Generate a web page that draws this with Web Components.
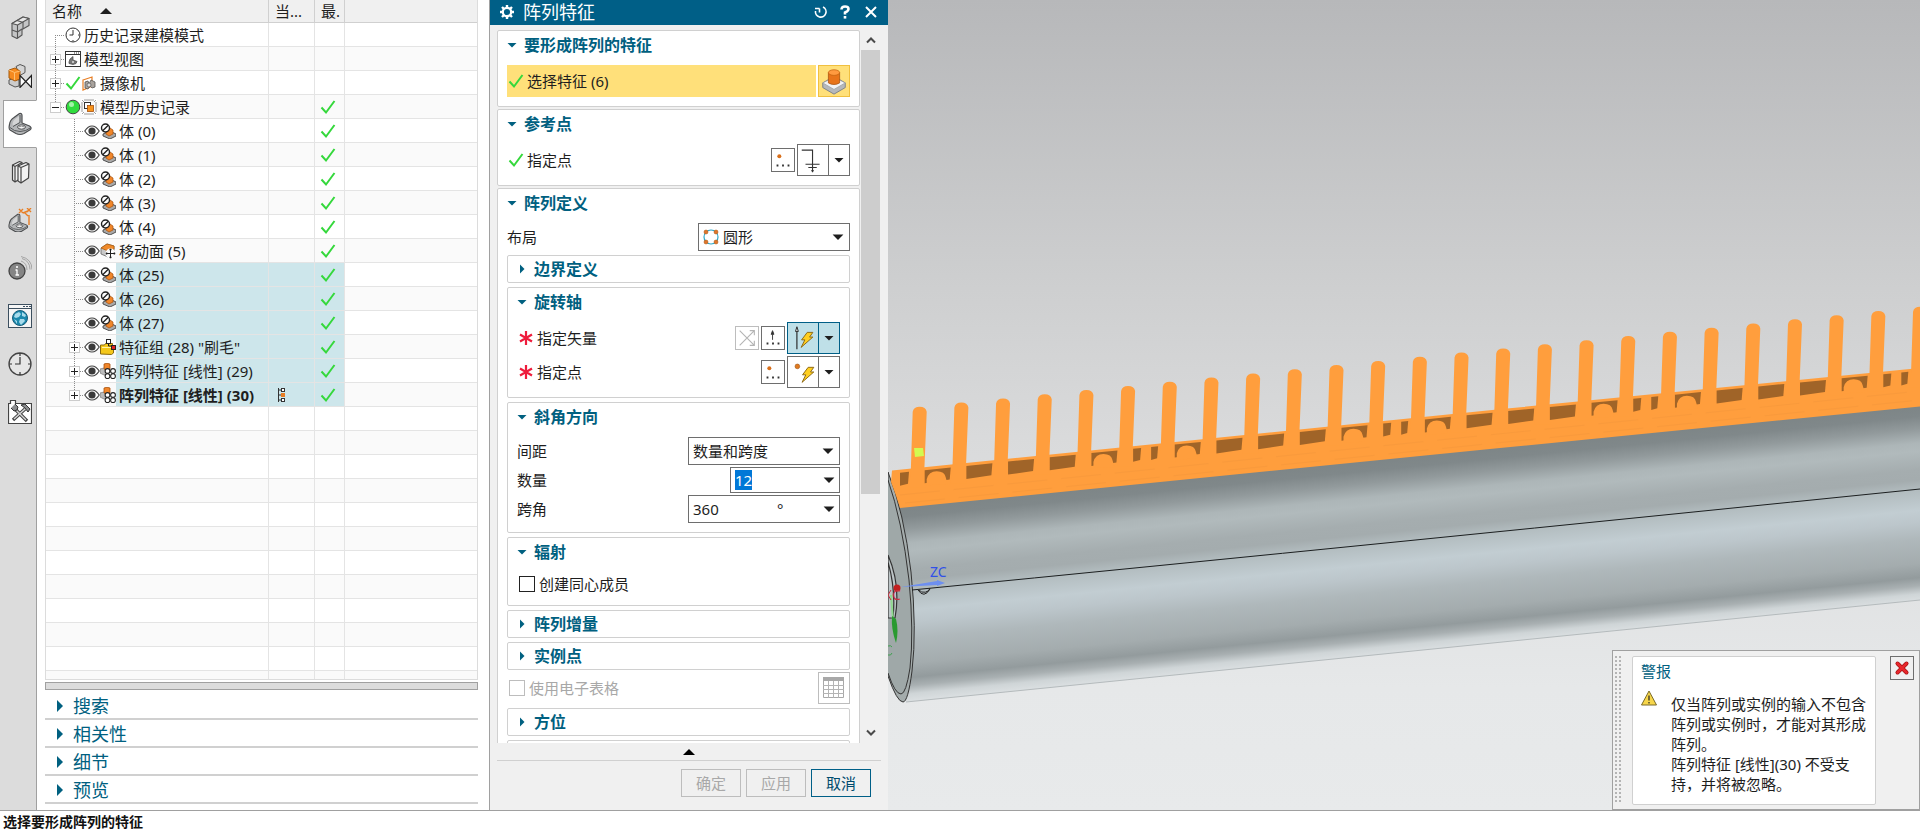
<!DOCTYPE html>
<html lang="zh-CN">
<head>
<meta charset="utf-8">
<title>阵列特征</title>
<style>
html,body{margin:0;height:100%}
body{font-family:"Noto Sans","Noto Sans CJK SC",sans-serif;font-size:15px;line-height:20px;color:#1e1e1e;background:#fff;overflow:hidden}
</style>
</head>
<body>
<nx-app></nx-app>
<script>
const define = (name, html, setup) => {
  const tpl = document.createElement('template');
  tpl.innerHTML = html;
  customElements.define(name, class extends HTMLElement {
    connectedCallback() {
      if (this.shadowRoot) return;
      this.attachShadow({mode: 'open'}).append(tpl.content.cloneNode(true));
      if (setup) setup(this, this.shadowRoot);
    }
  });
};

/* ---------- icons: [viewBox size, markup] ---------- */
const BRACKET = `<path d="M1.500 12.500Q2 8 6 5.500L11.500 1.500q2.500-.5 2.500 2V11l7.500 3q2.500 1.500 1 3.500l-6.500 4q-4 2-8 0L2 18q-1.500-1-.5-5.500z" fill="#b4b6b8" stroke="#4c4e50" stroke-width="1.200" stroke-linejoin="round"/><path d="M4.500 12Q5 8 8.500 6l3-2.200V10L5 14z" fill="#d4d5d6"/><path d="M5 14.500l7-4V3M2 15.500q4 4 10 4t11-4" fill="none" stroke="#55585a"/><ellipse cx="13.500" cy="15" rx="4" ry="2.200" fill="#f4f4f4" stroke="#4c4e50"/><path d="M10.500 15q3-2 6 0" fill="none" stroke="#888"/>`;
const BOLT = `<path d="M8.500 0h6L11 5h3.500L2 16l4-8H2.500z" fill="#ffcf20" stroke="#8a6410" stroke-width="1"/>`;
const ICONS = {
  assembly: [24, `<g stroke="#555" stroke-width="1.100" stroke-linejoin="round"><path d="M4 7.500L15 1l6 1.500v7l-7 4V19l-5 3.500-5-2.500z" fill="#c4c5c6"/><path d="M4 7.500L15 1l6 1.500L9.500 9z" fill="#e8e8e8"/><path d="M9.500 9v13M4 14l5.500 2 4.500-3M15 6v7M9 4.500l5.500 1.700" fill="none"/></g>`],
  constraint: [24, `<g stroke="#555" stroke-linejoin="round"><path d="M1 16l5-2 5 2v6l-4 1-6-3z" fill="#ccc"/><path d="M8 2.500l4-2 5 2v6l-5 3z" fill="#d5d5d5"/><path d="M1 6l6-2 5 3v8l-5 2-6-3z" fill="#f58a1f" stroke="#a65a0c"/><path d="M1 6l5.500 2.500L12 7M6.500 8.500V16" fill="none" stroke="#ffc070"/></g><path d="M12 11.500v12L23.500 11.500v12z" fill="#fff" stroke="#222" stroke-width="1.200"/>`],
  part: [24, BRACKET],
  library: [24, `<g fill="#f2f2f2" stroke="#444" stroke-width="1.200" stroke-linejoin="round"><path d="M4.500 5l7-3.500 2.500 1v15l-7 4.500-2.500-2z"/><path d="M4.500 5L7 6.500 14 2.500M7 6.500V22" fill="none"/><path d="M10 6l8-3.500 3 1.500-.5 14L13 23l-3-2z"/><path d="M10 6l3 1.500L21 4M13 7.500V23" fill="none"/></g>`],
  dimension: [24, `<g transform="translate(0 5) scale(.85)">${BRACKET}</g><path d="M11 1l4 4M15 1l-4 4M19 0l4 4M23 0l-4 4M15 5l5-2M21 7v10M17 5l3 3" stroke="#e87e24" stroke-width="1.400" fill="none"/>`],
  info: [24, `<circle cx="9" cy="15" r="8" fill="#858585" stroke="#444" stroke-width="1.300"/><path d="M9 13.500V19M7.500 14H9M7.500 19H11" stroke="#fff" stroke-width="1.300" fill="none"/><circle cx="9" cy="11" r="1.100" fill="#fff"/><path d="M13 5q6 2 6 9M14 2.500q8 2.500 8 11M13 .5q11 2.500 11 13" fill="none" stroke="#a4a4a4"/>`],
  web: [24, `<rect x=".5" y=".5" width="23" height="23" fill="#f6f6f6" stroke="#3c4f5f"/><path d="M.5 4.500h23M15 2.500h2M18 2.500h2M21 2.500h2" stroke="#3c4f5f"/><circle cx="12" cy="14" r="7.500" fill="#1c89ad" stroke="#175e7b"/><path d="M7 10l4-2 2 2-2 3-3 1-2-1zM14 8l4 3-1 2-3-1zM12 15h4l1 2-4 4-2-3zM6 15l3 2v3z" fill="#a9dcec"/>`],
  clock: [24, `<circle cx="12" cy="12" r="11" fill="#e6e6e6" stroke="#444" stroke-width="1.300"/><path d="M12 5v7H7" fill="none" stroke="#333" stroke-width="1.200"/><path d="M12 1v3M12 20v3M1 12h3M20 12h3" stroke="#333" stroke-width="1.200"/>`],
  roles: [24, `<path d="M.5 23.500v-20h2v-3h5v3h16v20z" fill="#fff" stroke="#444" stroke-width="1.200"/><path d="M5 20L17 9M7 9l12 12" stroke="#444" stroke-width="3.400"/><path d="M6 19L17 9M8 10l10 10" stroke="#d8d8d8" stroke-width="1.400"/><path d="M3 8l3 3 3-1 1-3-3-3M13 5l4-1 5 5-2 3-3-4z" fill="#8a8c8e" stroke="#333"/>`],
  history: [16, `<circle cx="8" cy="8" r="7" fill="#fff" stroke="#333"/><path d="M8 3v5H4.500" fill="none" stroke="#333"/><path d="M8 13v1.500M13 8h1.500" stroke="#333"/>`],
  view: [16, `<rect x=".5" y=".5" width="15" height="15" fill="#fff" stroke="#333"/><path d="M.5 3.500h15M9 2h1M11 2h1M13 2h1" stroke="#333"/><path d="M4 11l1-3 3-2.500V9l4 1.500-1 2-3 1-4-1z" fill="#777" stroke="#444" stroke-width=".7"/><circle cx="8" cy="11" r="1" fill="#ddd"/>`],
  check: [16, `<path d="M1.500 8.500l4.500 5L14.500 2" fill="none" stroke="#35d83c" stroke-width="2"/>`],
  camera: [16, `<path d="M2 5l9-3v9l-9 4z" fill="#fff" stroke="#e87e24" stroke-width="1.200"/><path d="M4 13V7l3-1 1 3 2-4 4 2v5l-3 1-2-2-2 3z" fill="#a9a39d" stroke="#555" stroke-width=".8"/><circle cx="8" cy="10" r="2" fill="#ddd" stroke="#555" stroke-width=".7"/>`],
  green: [16, `<circle cx="8" cy="8" r="6.800" fill="#2fdc3d" stroke="#444"/><circle cx="6.500" cy="5.500" r="2.500" fill="#a3f3a8"/>`],
  model: [16, `<rect x="1" y="1" width="14" height="14" fill="none" stroke="#888" stroke-width=".8"/><path d="M0 0h3v3H0zM13 0h3v3h-3zM0 13h3v3H0zM13 13h3v3h-3z" fill="#fff"/><path d="M1 1l2 2M15 1l-2 2M1 15l2-2M15 15l-2-2" stroke="#888" stroke-width=".8"/><rect x="3.500" y="3.500" width="6" height="6" fill="#fff" stroke="#333"/><rect x="6.500" y="6.500" width="6" height="6" fill="#f7941d" stroke="#a7500c" stroke-width=".8"/>`],
  eye: [16, `<path d="M.8 8Q4 3 8 3t7.200 5Q12 13 8 13T.8 8z" fill="#fff" stroke="#444" stroke-width="1.200"/><circle cx="8" cy="8" r="3.600" fill="#3a3a3a"/>`],
  body: [16, `<path d="M3 11l7-3 6 3v2l-6 3-7-3z" fill="#a9a9a9" stroke="#444" stroke-width=".9"/><path d="M6 9l4-4 3 2v4l-4 2-3-2z" fill="#f0862a" stroke="#a7500c" stroke-width=".7"/><circle cx="5.500" cy="5" r="4" fill="#fff" fill-opacity=".8" stroke="#222" stroke-width="1.400"/><path d="M2.700 7.800l5.600-5.600" stroke="#222" stroke-width="1.400"/>`],
  moveface: [16, `<path d="M1 5l6-4 7 2v7l-6 4-7-3z" fill="#c8c8c8" stroke="#666" stroke-width=".8"/><path d="M1 5l6-4 7 2v3l-6 2z" fill="#f08a2a" stroke="#b0600c" stroke-width=".8"/><circle cx="10.500" cy="10.500" r="5" fill="#fff"/><path d="M10.500 6v9M6 10.500h9M9.500 7.200l1-1.400 1 1.400M9.500 13.800l1 1.400 1-1.400M7.200 9.500l-1.400 1 1.400 1M13.800 9.500l1.400 1-1.400 1" fill="none" stroke="#222"/>`],
  group: [16, `<path d="M.5 15V6h4l1-1.500h7V6l1 1v7l-2 1.500z" fill="#f4c71a" stroke="#8a6a10"/><path d="M2 8h10v1H2z" fill="#fff3a8"/><path d="M8.500 3v4h5" fill="none" stroke="#222"/><rect x="6.500" y=".5" width="4" height="4" fill="#fff" stroke="#222"/><rect x="11.500" y="6.500" width="4" height="4" fill="#e02020" stroke="#222"/>`],
  pattern: [16, `<path d="M0 6l4-1 4 2v4l-4 1-4-2z" fill="#bbb" stroke="#777" stroke-width=".7"/><path d="M4 1q3-1.500 6 0v5q-3 2-6 0z" fill="#f0862a" stroke="#a7500c" stroke-width=".8"/><g fill="#fff" stroke="#222" stroke-width="1.100"><circle cx="7.500" cy="8" r="2.400"/><circle cx="13" cy="8" r="2.400"/><circle cx="7.500" cy="13.200" r="2.400"/><circle cx="13" cy="13.200" r="2.400"/></g>`],
  current: [16, `<path d="M1.500 1v14" stroke="#333"/><g fill="#fff" stroke="#333"><rect x="4.500" y="1.500" width="3" height="3"/><rect x="4.500" y="11.500" width="3" height="3"/></g><rect x="4" y="6" width="4" height="4" fill="#e87e24"/><path d="M1 3h3M1 8h3M1 13h3" stroke="#333"/>`],
  gear: [16, `<path d="M8 1v14M1 8h14M3 3l10 10M13 3L3 13" stroke="#fff" stroke-width="2.400"/><circle cx="8" cy="8" r="4.200" fill="#005f87" stroke="#fff" stroke-width="2.200"/>`],
  reset: [16, `<path d="M6.500 4.500v4M6.500 4.500h-4.500M10 3a5.300 5.300 0 1 1-7.500 4" fill="none" stroke="#fff" stroke-width="1.600"/>`],
  help: [16, `<path d="M4.500 5.500Q4.500 2.500 8 2.500t3.500 2.500Q11.500 7 8 8.500v2" fill="none" stroke="#fff" stroke-width="2.600"/><rect x="6.700" y="12" width="2.600" height="2.600" fill="#fff"/>`],
  close: [16, `<path d="M3 3l10 10M13 3L3 13" stroke="#fff" stroke-width="2"/>`],
  feature: [32, `<path d="M4 18l12-7 12 7v5l-12 7-12-7z" fill="#b5b8bc" stroke="#7d8084"/><path d="M4 18l12-6 12 6-12 7z" fill="#f2f3f5" stroke="#9a9da0" stroke-width=".8"/><path d="M10 7v11q6 3.500 12 0V7z" fill="#e8741a" stroke="#a7500c" stroke-width=".8"/><ellipse cx="16" cy="7" rx="6" ry="3" fill="#ff9a40" stroke="#c4630f" stroke-width=".8"/>`],
  pointdlg: [24, `<circle cx="8" cy="8" r="2.200" fill="#d96f1a"/><path d="M5 18h2M11 18h2M17 18h2" stroke="#333" stroke-width="2"/>`],
  vectordlg: [24, `<path d="M11.500 14V8M11.500 4l1.500 4h-3z" fill="#333" stroke="#333"/><path d="M5 18h2M11 18h2M17 18h2" stroke="#333" stroke-width="2"/>`],
  reverse: [24, `<path d="M4 20L20 4M4 4l16 16M15 4h5v5M15 20h5v-5" fill="none" stroke="#b4b4b4" stroke-width="1.200"/>`],
  ground: [32, `<path d="M4 5.500h11.500V20M8 20.500h15M11 24h9M14 27.500h3M15.500 20v9" fill="none" stroke="#333" stroke-width="1.200"/>`],
  vectorauto: [32, `<path d="M9.500 28V9" stroke="#222" stroke-width="1.200"/><path d="M9.500 4l1.500 5h-3z" fill="#fff" stroke="#222"/><g transform="translate(12 10)">${BOLT}</g>`],
  pointauto: [32, `<circle cx="10" cy="10" r="2.500" fill="#e07a20" stroke="#9c4f0c" stroke-width=".6"/><g transform="translate(13 11)">${BOLT}</g>`],
  circular: [16, `<circle cx="8" cy="8" r="7" fill="none" stroke="#2ba6c8" stroke-width="1.200"/><g fill="#e0762a" stroke="#a7500c" stroke-width=".5"><circle cx="3" cy="3" r="2"/><circle cx="13" cy="3" r="2"/><circle cx="3" cy="13" r="2"/><circle cx="13" cy="13" r="2"/></g>`],
  required: [16, `<path d="M8 1v14M2 4.500l12 7M14 4.500l-12 7" stroke="#ee1c3c" stroke-width="2.200"/>`],
  sheet: [24, `<path d="M1.500 1.500h20v20h-20z" fill="#fff" stroke="#a8a8a8"/><path d="M1 1h21v4H1z" fill="#a8a8a8"/><path d="M1 9.500h21M1 13.500h21M1 17.500h21M6.500 5v17M11.500 5v17M16.500 5v17" stroke="#b4b4b4"/>`],
  warning: [16, `<path d="M8 1L15.500 15H.5z" fill="#f7d64a" stroke="#7a6a28"/><path d="M8 5.500v5M8 12v1.500" stroke="#222" stroke-width="1.200"/>`],
  redx: [16, `<path d="M3.500 3.500l9 9M12.500 3.500l-9 9" stroke="#a31010" stroke-width="4" stroke-linecap="round"/><path d="M3.500 3.500l9 9M12.500 3.500l-9 9" stroke="#e8272c" stroke-width="2.600" stroke-linecap="round"/>`],
  chevup: [12, `<path d="M2 8.500L6 4.500l4 4" fill="none" stroke="#4a4a4a" stroke-width="2"/>`],
  chevdown: [12, `<path d="M2 3.500L6 7.500l4-4" fill="none" stroke="#4a4a4a" stroke-width="2"/>`],
  tridown: [10, `<path d="M.5 3h9L5 7.500z" fill="currentColor"/>`],
  triup: [12, `<path d="M0 9L6 3l6 6z" fill="currentColor"/>`],
  triright: [10, `<path d="M3 .5v9L7.500 5z" fill="currentColor"/>`],
  trirightlg: [12, `<path d="M3 0v12l6-6z" fill="currentColor"/>`]
};
define('nx-icon', `<style>:host{display:block;flex:none}svg{display:block}</style>`, (el, root) => {
  const [box, art] = ICONS[el.getAttribute('name')];
  const size = el.getAttribute('size') || box;
  root.innerHTML += `<svg width="${size}" height="${size}" viewBox="0 0 ${box} ${box}" aria-hidden="true">${art}</svg>`;
});

/* ---------- resource bar ---------- */
define('nx-rail', `<style>
:host{display:block;flex:none;width:36px;padding-top:4px;background:#dcdcdc;border-right:1px solid #a0a0a0}
button{display:flex;align-items:center;width:36px;height:48px;padding:0 0 0 7px;border:1px solid transparent;background:none;margin:0}
button.on{width:34px;margin-left:3px;padding-left:4px;background:#fff;border-color:#a0a0a0;border-right-color:#fff}
</style><div></div>`, (el, root) => {
  root.querySelector('div').innerHTML = [['assembly','装配导航器'],['constraint','约束导航器'],['part','部件导航器'],['library','重用库'],['dimension','尺寸'],['info','信息'],['web','浏览器'],['clock','历史记录'],['roles','角色']]
    .map(([n, t]) => `<button class="${n === 'part' ? 'on' : ''}" aria-label="${t}"><nx-icon name="${n}"></nx-icon></button>`).join('');
});

/* ---------- part navigator ---------- */
define('nx-tree', `<style>
:host{display:block;flex:1;min-height:0;overflow:hidden;border:1px solid #dcdcdc;border-top:0}
table{width:100%;border-collapse:separate;border-spacing:0;table-layout:fixed}
th,td{box-sizing:border-box;padding:0;height:24px;border-bottom:1px solid #e4e4e4;border-right:1px solid #e4e4e4;font-weight:400;text-align:left;white-space:nowrap;overflow:hidden}
th{height:23px;background:#f0f0f0;border-color:#d0d0d0;padding-left:6px}
th:last-child,td:last-child{border-right:0}
tbody tr:nth-child(even){background:#fafafa}
.c2{width:46px}.c3{width:30px}.c4{width:132px}
.head,.node,.mid{display:flex;align-items:center}
.head{gap:18px}
.node{height:23px}
.node svg{flex:none;overflow:visible}
.name{flex:1;align-self:stretch;padding-left:3px;line-height:25px}
.mid{justify-content:flex-start;padding-left:5px}
.cur{padding-left:8px}
.sel .name,.sel td.a{background:#cde6eb}
.bold{font-weight:700}
</style><table><colgroup><col><col class="c2"><col class="c3"><col class="c4"></colgroup>
<thead><tr><th><div class="head">名称<nx-icon name="triup"></nx-icon></div></th><th>当...</th><th>最.</th><th></th></tr></thead><tbody></tbody></table>`, (el, root) => {
  const rows = [
    [1,'','history','历史记录建模模式'],[1,'+','view','模型视图'],[1,'+','check camera','摄像机'],[1,'-','green model','模型历史记录',1],
    ...[0,1,2,3,4].map(n => [2,'','eye body',`体 (${n})`,1]),
    [2,'','eye moveface','移动面 (5)',1],
    ...[25,26,27].map(n => [2,'','eye body',`体 (${n})`,1,1]),
    [2,'+','eye group','特征组 (28) "刷毛"',1,1],[2,'+','eye pattern','阵列特征 [线性] (29)',1,1],[2,'+','eye pattern','阵列特征 [线性] (30)',1,1,1]
  ];
  const guide = (lvl, exp, i) => {
    const x = lvl === 1 ? 9 : 28, w = lvl === 1 ? 19 : 38;
    const top = i === 0 ? 12 : 0, bot = i === 3 || i === rows.length - 1 ? 12 : 24;
    return `<svg width="${w}" height="23" aria-hidden="true"><path d="M${x}.500 ${top}V${bot}M${x} 12.500H${w}" fill="none" stroke="#8c8c8c" stroke-dasharray="1 1"/>` +
      (exp ? `<rect x="${x - 5}.500" y="7.500" width="10" height="10" fill="#fff" stroke="#ccc"/><path d="M${x - 3} 12.500h7${exp === '+' ? `M${x}.500 9v7` : ''}" stroke="#222"/>` : '') + `</svg>`;
  };
  let html = rows.map(([lvl, exp, icons, text, ok, sel, cur], i) => `<tr class="${sel ? 'sel' : ''}"><td><div class="node">${guide(lvl, exp, i)}${icons.split(' ').map(n => `<nx-icon name="${n}"></nx-icon>`).join('')}<span class="name ${cur ? 'bold' : ''}">${text}</span></div></td><td class="a">${cur ? '<div class="cur"><nx-icon name="current"></nx-icon></div>' : ''}</td><td class="a">${ok ? '<div class="mid"><nx-icon name="check"></nx-icon></div>' : ''}</td><td></td></tr>`).join('');
  html += '<tr><td></td><td></td><td></td><td></td></tr>'.repeat(30);
  root.querySelector('tbody').innerHTML = html;
});
define('nx-drawer', `<style>
:host{display:block;border-bottom:2px solid #d0d0d0}
button{display:flex;align-items:center;gap:7px;width:100%;height:26px;padding:2px 0 0 9px;border:0;background:none;color:#006080;font:18px/26px "Noto Sans","Noto Sans CJK SC",sans-serif}
</style><button><nx-icon name="trirightlg"></nx-icon><span><slot></slot></span></button>`);
define('nx-navigator', `<style>
:host{display:flex;flex-direction:column;flex:none;box-sizing:border-box;width:453px;padding:0 11px 6px 8px;background:#fff;border-right:1px solid #a0a0a0}
.split{flex:none;box-sizing:border-box;height:8px;margin:2px 0;background:#dcdcdc;border:1px solid #a0a0a0}
</style><nx-tree></nx-tree><div class="split"></div>
<nx-drawer>搜索</nx-drawer><nx-drawer>相关性</nx-drawer><nx-drawer>细节</nx-drawer><nx-drawer>预览</nx-drawer>`);

/* ---------- dialog ---------- */
define('nx-group', `<style>
:host{display:block;box-sizing:border-box;padding:0 9px 9px;border:1px solid #d0d0d0;border-radius:2px;background:#fff}
:host([closed]){padding-bottom:0;height:28px}
button{display:flex;align-items:center;gap:7px;width:100%;height:28px;margin:0 0 6px;padding:0;border:0;background:none;color:#006080;text-align:left;font:700 16px/28px "Noto Sans","Noto Sans CJK SC",sans-serif}
:host([closed]) button{height:26px;margin:0}
.body{display:flex;flex-direction:column;gap:var(--row-gap,2px)}
:host([closed]) .body{display:none}
</style><button><span></span></button><div class="body"><slot></slot></div>`, (el, root) => {
  const icon = document.createElement('nx-icon');
  icon.setAttribute('name', el.hasAttribute('closed') ? 'triright' : 'tridown');
  root.querySelector('button').prepend(icon);
  root.querySelector('span').textContent = el.getAttribute('heading');
});

define('nx-dialog', `<style>
:host{display:flex;flex-direction:column;flex:none;width:398px;background:#f0f0f0}
header{display:flex;align-items:center;gap:8px;flex:none;height:25px;box-sizing:border-box;padding:0 9px 1px 9px;background:#005f87;color:#fff}
h1{flex:1;margin:0;font:400 18px/22px "Noto Sans","Noto Sans CJK SC",sans-serif}
header button{padding:0;border:0;background:none}
header button:last-child{margin-left:2px}
.main{flex:1;min-height:0;display:flex;gap:1px;padding:5px 8px 0 7px}
.scroll{flex:1;min-width:0;overflow:hidden;display:flex;flex-direction:column;gap:2px}
.scroll>nx-group{flex:none}
.bar{flex:none;display:flex;flex-direction:column;width:19px}
.bar button{display:flex;justify-content:center;align-items:center;height:20px;padding:0;border:0;background:none}
.thumb{flex:444;background:#cdcdcd}.rest{flex:229}
.row{display:flex;align-items:center;height:32px;color:#1e1e1e}
.row.s{height:28px}.row.m{height:26px}.row.t{height:24px}
.row label{white-space:nowrap}
.mark{margin:0 3px 0 1px}
.end{margin-left:auto;display:flex;align-items:center;gap:2px}
.hot{flex:1;display:flex;align-items:center;height:32px;background:#ffe07a;margin-right:2px}
.b{box-sizing:border-box;display:flex;align-items:center;justify-content:center;width:24px;height:24px;padding:0;border:1px solid #6e6e6e;background:#fff}
.b:disabled{border-color:#bdbdbd}
.big{width:32px;height:32px}
.pick{background:#ffe07a;border-color:#f0c040}
.combo{display:flex}
.combo .arrow{width:22px;height:32px;margin-left:-1px;color:#1e1e1e}
.on .b{background:#bfe0e8;border-color:#005f87}
.box{position:relative;box-sizing:border-box;display:flex;align-items:center;width:152px;height:28px;border:1px solid #6e6e6e;background:#fff}
.count{width:110px;height:26px}
select,input.txt{box-sizing:border-box;width:100%;height:100%;margin:0;padding:0 0 0 4px;border:0;background:none;color:#1e1e1e;font:15px/20px "Noto Sans","Noto Sans CJK SC",sans-serif;outline:0}
select{appearance:none}
select.ic{padding-left:24px}
.ov{position:absolute;top:0;bottom:0;display:flex;align-items:center;pointer-events:none}
.l{left:4px}.r{right:5px}
.box .drop{padding:0 4px;height:100%;border:0;background:none;color:#1e1e1e}
input.txt{flex:1;min-width:0}
::selection{background:#0078d7;color:#fff}
.unit{width:40px}
input[type=checkbox]{appearance:none;box-sizing:border-box;width:16px;height:16px;margin:0 4px 0 2px;border:1px solid #222;background:#fff}
input[type=checkbox]:disabled{border-color:#bdbdbd}
.row label.off{color:#a8a8a8}
.sheet{margin-top:-2px}
.more{flex:none;height:17px;padding:0;border:0;background:none;display:flex;justify-content:center;align-items:center}
footer{flex:none;display:flex;justify-content:flex-end;gap:5px;margin:0 7px;padding:8px 10px 13px;border-top:1px solid #d0d0d0}
footer button{width:60px;height:28px;box-sizing:border-box;padding:0;border:1px solid #bdbdbd;background:#f0f0f0;color:#a8a8a8;font:15px/20px "Noto Sans","Noto Sans CJK SC",sans-serif}
footer .go{border-color:#005f87;color:#004a6e}
</style>
<header><nx-icon name="gear"></nx-icon><h1>阵列特征</h1><button aria-label="重置"><nx-icon name="reset"></nx-icon></button><button aria-label="帮助"><nx-icon name="help"></nx-icon></button><button aria-label="关闭"><nx-icon name="close"></nx-icon></button></header>
<div class="main"><div class="scroll">
<nx-group heading="要形成阵列的特征">
  <div class="row"><div class="hot"><nx-icon class="mark" name="check"></nx-icon><label for="pick">选择特征 (6)</label></div><button id="pick" class="b big pick"><nx-icon name="feature" size="30"></nx-icon></button></div>
</nx-group>
<nx-group heading="参考点">
  <div class="row"><nx-icon class="mark" name="check"></nx-icon><label for="ref">指定点</label><div class="end"><button id="ref" class="b"><nx-icon name="pointdlg" size="22"></nx-icon></button><div class="combo"><button class="b big" aria-label="点类型"><nx-icon name="ground" size="30"></nx-icon></button><button class="b arrow" aria-label="更多"><nx-icon name="tridown"></nx-icon></button></div></div></div>
</nx-group>
<nx-group heading="阵列定义" style="--row-gap:4px">
  <div class="row s"><label for="layout">布局</label><div class="end box"><span class="ov l"><nx-icon name="circular"></nx-icon></span><select id="layout" class="ic"><option>圆形</option></select><span class="ov r"><nx-icon name="tridown" size="12"></nx-icon></span></div></div>
  <nx-group heading="边界定义" closed></nx-group>
  <nx-group heading="旋转轴" style="--row-gap:2px">
    <div class="row"><nx-icon class="mark" name="required"></nx-icon><label for="vec">指定矢量</label><div class="end"><button class="b" disabled aria-label="反向"><nx-icon name="reverse" size="22"></nx-icon></button><button id="vec" class="b"><nx-icon name="vectordlg" size="22"></nx-icon></button><div class="combo on"><button class="b big" aria-label="自动判断矢量"><nx-icon name="vectorauto" size="30"></nx-icon></button><button class="b arrow" aria-label="更多"><nx-icon name="tridown"></nx-icon></button></div></div></div>
    <div class="row"><nx-icon class="mark" name="required"></nx-icon><label for="pt">指定点</label><div class="end"><button id="pt" class="b"><nx-icon name="pointdlg" size="22"></nx-icon></button><div class="combo"><button class="b big" aria-label="自动判断点"><nx-icon name="pointauto" size="30"></nx-icon></button><button class="b arrow" aria-label="更多"><nx-icon name="tridown"></nx-icon></button></div></div></div>
  </nx-group>
  <nx-group heading="斜角方向" style="--row-gap:2px">
    <div class="row s"><label for="space">间距</label><div class="end box"><select id="space"><option>数量和跨度</option></select><span class="ov r"><nx-icon name="tridown" size="12"></nx-icon></span></div></div>
    <div class="row m"><label for="count">数量</label><div class="end box count"><input id="count" class="txt" value="12"><button class="drop" aria-label="数量选项"><nx-icon name="tridown" size="12"></nx-icon></button></div></div>
    <div class="row s"><label for="angle">跨角</label><div class="end box"><input id="angle" class="txt" value="360"><span class="unit">°</span><button class="drop" aria-label="跨角选项"><nx-icon name="tridown" size="12"></nx-icon></button></div></div>
  </nx-group>
  <nx-group heading="辐射">
    <div class="row t"><input type="checkbox" id="conc"><label for="conc">创建同心成员</label></div>
  </nx-group>
  <nx-group heading="阵列增量" closed></nx-group>
  <nx-group heading="实例点" closed></nx-group>
  <div class="row sheet"><input type="checkbox" id="sheet" disabled><label class="off" for="sheet">使用电子表格</label><div class="end"><button class="b big" disabled aria-label="电子表格"><nx-icon name="sheet"></nx-icon></button></div></div>
  <nx-group heading="方位" closed></nx-group>
  <nx-group heading="" closed></nx-group>
</nx-group>
</div>
<div class="bar"><button aria-label="向上滚动"><nx-icon name="chevup"></nx-icon></button><div class="thumb"></div><div class="rest"></div><button aria-label="向下滚动"><nx-icon name="chevdown"></nx-icon></button></div>
</div>
<button class="more" aria-label="收起"><nx-icon name="triup"></nx-icon></button>
<footer><button disabled>确定</button><button disabled>应用</button><button class="go">取消</button></footer>`, (el, root) => {
  const count = root.querySelector('#count');
  count.focus();
  count.select();
});

/* ---------- graphics window ---------- */
define('nx-alert', `<style>
:host{display:flex;box-sizing:border-box;width:308px;padding:5px 5px 4px 2px;gap:10px;align-items:flex-start;background:#f0f0f0;border:1px solid #a0a0a0}
.grip{align-self:stretch;width:7px;margin-bottom:2px;background:conic-gradient(from 0deg at 2px 2px,transparent 270deg,#b4b4b4 0) 0 0/4px 4px}
.card{box-sizing:border-box;width:244px;padding:4px 9px 10px 8px;border:1px solid #d0d0d0;border-radius:2px;background:#fff}
h2{margin:0 0 13px;font:400 15px/20px "Noto Sans","Noto Sans CJK SC",sans-serif;color:#006080}
.msg{display:flex;gap:14px}
.msg nx-icon{margin-top:-4px}
p{margin:0;white-space:nowrap}
button{box-sizing:border-box;width:24px;height:24px;margin-left:4px;padding:3px;border:1px solid #6e6e6e;background:#f0f0f0}
</style><div class="grip"></div><div class="card"><h2>警报</h2><div class="msg"><nx-icon name="warning"></nx-icon><p>仅当阵列或实例的输入不包含<br>阵列或实例时，才能对其形成<br>阵列。<br>阵列特征 [线性](30) 不受支<br>持，并将被忽略。</p></div></div><button aria-label="关闭"><nx-icon name="redx"></nx-icon></button>`);

define('nx-viewport', `<style>
:host{display:block;position:relative;flex:1;min-width:0;background:linear-gradient(#b7b8ba,#cdcecf 34%,#d9dadb 54%,#e6e8e9 85%,#e8eaeb)}
svg{position:absolute;left:0;top:0;width:100%;height:100%}
nx-alert{position:absolute;right:0;bottom:0}
</style>
<svg viewBox="888 0 1032 810" preserveAspectRatio="xMinYMid slice" role="img" aria-label="模型">
<defs>
<linearGradient id="skin" gradientUnits="userSpaceOnUse" x1="0" y1="590" x2="0" y2="794" gradientTransform="skewY(-5.650)">
<stop offset="0" stop-color="#7c8485"/><stop offset=".08" stop-color="#80888a"/><stop offset=".14" stop-color="#929a9c"/><stop offset=".21" stop-color="#adb6b8"/><stop offset=".25" stop-color="#b1babc"/><stop offset=".34" stop-color="#a5adaf"/><stop offset=".39" stop-color="#a4acae"/><stop offset=".44" stop-color="#b2bcbf"/><stop offset=".54" stop-color="#c2cdd2"/><stop offset=".6" stop-color="#bcc6cb"/><stop offset=".68" stop-color="#afb8bb"/><stop offset=".8" stop-color="#a4acae"/><stop offset=".87" stop-color="#939b9d"/><stop offset=".91" stop-color="#a9b0b2"/><stop offset=".95" stop-color="#cfd5d7"/><stop offset="1" stop-color="#dfe3e5"/>
</linearGradient>
</defs>
<path d="M892 480L1920 385V600L906 702z" fill="url(#skin)"/>
<path d="M906 702L1920 600" stroke="#b4babc" fill="none"/>
<path d="M888 472Q904 512 911 572Q917 630 912 671Q908 702 903 702Q897 702 888 676z" fill="#a4acac" stroke="#333"/>
<path d="M888 480Q902 520 909 580Q914 632 910 668Q906 694 901 694Q895 694 888 673" fill="#9fa8a8" stroke="#333"/>
<path d="M888 555Q901 585 895 618H888zM888 562Q896 590 893 618" fill="#bcc4c6" stroke="#333" stroke-width="1.200"/>
<path d="M912 590Q1400 542 1920 489" stroke="#1c1f20" fill="none"/>
<path d="M919 590a6 5 0 0 0 11-2M918 590q6 9 12-1" stroke="#222" fill="none"/>
<g id="brush"></g>
<path d="M901 587l36-6v-1l8 3-8 3v-1l-36 2z" fill="#6d8ff0"/>
<circle cx="897" cy="588" r="3.500" fill="#c22020"/>
<path d="M891 595l2 25" stroke="#8fd98f" stroke-width="2"/><path d="M892 616l4 3q3 12 0 24-5-14-4-27z" fill="#2a9a30"/>
<path d="M891 590l-3 5 3 5" stroke="#c83040" fill="none"/><path d="M888 646q3-1 4 1M888 655q3 1 4-2" stroke="#40a050" fill="none"/>
<g font-family="Noto Sans, sans-serif" font-size="14"><text x="930" y="577" fill="#3050e8">ZC</text><text x="892" y="600" fill="#c83040">C</text></g>
</svg>
<nx-alert></nx-alert>`, (el, root) => {
  /* A: arched opening, F: full opening, S: split opening */
  const gaps = 'AFFFASAFFFASAFAFASAFFFAS'.replace('AFAFASAFFFAS', 'FFFASAFFFAS');
  const kinds = ['A','F','F','F','A','S','A','F','F','F','A','S','A','F','F','F','A','S','A','F','F','F','A','S'];
  const edge = x => 470.5 - (x - 892) * 0.1 - Math.sin((x - 892) / 1028 * Math.PI) * 0.8;
  let s = `<path d="M892 470.500L1195 440L1507 408.500L1920 368V406.500L1500 448L1195 478.500L900 508Q896 495 891 482z" fill="#ff9e3d"/>`;
  s += `<path d="M900 495L1920 391M905 503L1920 400" stroke="#f99a3c" stroke-dasharray="40 14" fill="none"/>`;
  const dark = (a, b) => `<path d="M${a} ${edge(a) + 3}L${b} ${edge(b) + 3}L${b - 1} ${edge(b) + 15}L${a} ${edge(a) + 16}z" fill="#a06428"/>`;
  s += dark(900, 909);
  for (let i = 0; i < 25; i++) {
    const x = 919.7 + i * 41.68, y = 406.7 - i * 4.16, e = edge(x);
    s += `<path d="M${x - 7} ${y + 5}Q${x - 6} ${y} ${x} ${y}T${x + 7} ${y + 5}L${x + 4.500} ${e + 5}L${x + 5.500} ${e + 20}H${x - 11}L${x - 9} ${e + 6}z" fill="#ff9e3d"/>`;
    const a = x + 5, b = x + 31;
    if (kinds[i] === 'S') s += dark(a, a + 8) + dark(a + 18, b - 1);
    else if (kinds[i]) s += dark(a, b);
    if (kinds[i] === 'A') s += `<path d="M${a + 2} ${edge(a) + 18}V${edge(a) + 12}Q${a + 4} ${edge(a) + 4} ${a + 12} ${edge(a) + 4}T${b - 5} ${edge(a) + 10}L${b - 3} ${edge(a) + 17}z" fill="#ff9e3d"/>`;
  }
  s += `<path d="M914 448h9l1 8-9 1z" fill="#d2fa50"/>`;
  root.querySelector('#brush').innerHTML = s;
});

/* ---------- shell ---------- */
define('nx-status', `<style>:host{display:block;flex:none;box-sizing:border-box;height:23px;padding-left:3px;border-top:1px solid #a0a0a0;background:#fff;color:#111;font-size:14px;font-weight:700;line-height:22px}</style><slot></slot>`);
define('nx-app', `<style>:host{display:flex;flex-direction:column;height:100vh}.work{display:flex;flex:1;min-height:0}</style>
<div class="work"><nx-rail></nx-rail><nx-navigator></nx-navigator><nx-dialog></nx-dialog><nx-viewport></nx-viewport></div><nx-status>选择要形成阵列的特征</nx-status>`);
</script>
</body>
</html>
